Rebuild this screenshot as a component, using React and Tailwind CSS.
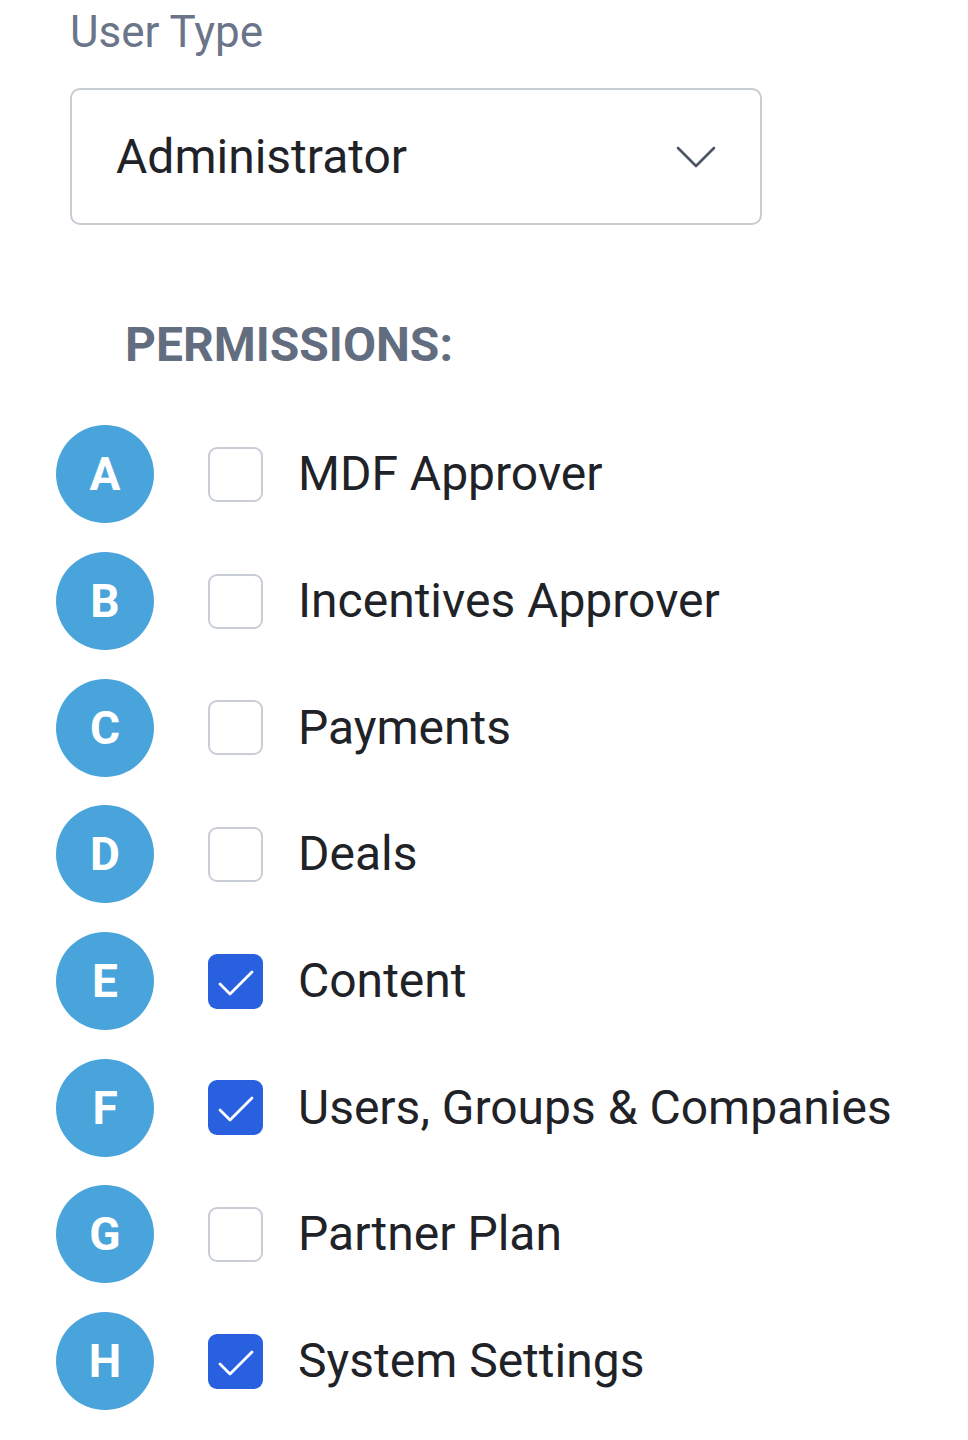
import React from 'react';

const ChevronDownIcon = () => (
  <svg className="w-[40px] h-[24px]" fill="none" stroke="currentColor" viewBox="0 0 40 24">
    <path strokeLinecap="round" strokeLinejoin="round" strokeWidth={2.6} d="M2 3l18 18 18-18" />
  </svg>
);

const CheckIcon = () => (
  <svg className="w-[55px] h-[55px]" fill="none" stroke="white" viewBox="0 0 55 55">
    <path strokeLinecap="round" strokeLinejoin="round" strokeWidth={2.8} d="M12 30l10 10 22-22" />
  </svg>
);

const permissions = [
  { key: 'A', label: 'MDF Approver', checked: false },
  { key: 'B', label: 'Incentives Approver', checked: false },
  { key: 'C', label: 'Payments', checked: false },
  { key: 'D', label: 'Deals', checked: false },
  { key: 'E', label: 'Content', checked: true },
  { key: 'F', label: 'Users, Groups & Companies', checked: true },
  { key: 'G', label: 'Partner Plan', checked: false },
  { key: 'H', label: 'System Settings', checked: true },
];

const PermissionRow = ({ item }) => (
  <div className="flex items-center h-[126.7px]">
    {/* Marker */}
    <div className="w-[98px] h-[98px] rounded-full bg-[#4aa4dc] flex items-center justify-center">
      <span className="text-white font-bold text-[46px] leading-none">{item.key}</span>
    </div>

    {/* Checkbox */}
    <div
      className={`ml-[54px] w-[55px] h-[55px] rounded-[9px] flex items-center justify-center ${
        item.checked ? 'bg-[#2860df]' : 'border-2 border-[#c9ced6] bg-white'
      }`}
    >
      {item.checked && <CheckIcon />}
    </div>

    {/* Label */}
    <span className="ml-[35px] text-[48px] text-[#1f2328] leading-none">{item.label}</span>
  </div>
);

const App = () => {
  return (
    <div className="w-[968px] h-[1440px] bg-white font-['Roboto',sans-serif] overflow-hidden">
      <div className="pl-[56px] pt-[4px]">
        {/* User Type */}
        <div className="pl-[14px]">
          <p className="text-[44px] leading-[56px] text-[#6b7589]">User Type</p>
          <div className="mt-[28px] w-[692px] h-[137px] border-2 border-[#c8ccd3] rounded-[10px] flex items-center justify-between pl-[44px] pr-[44px]">
            <span className="text-[48px] text-[#1f2328]">Administrator</span>
            <span className="text-[#4b5563]">
              <ChevronDownIcon />
            </span>
          </div>
        </div>

        {/* Permissions */}
        <h2 className="mt-[96px] pl-[69px] text-[48px] leading-none font-bold text-[#636d80]">PERMISSIONS:</h2>

        <div className="mt-[42px] flex flex-col">
          {permissions.map((item) => (
            <PermissionRow key={item.key} item={item} />
          ))}
        </div>
      </div>
    </div>
  );
};

export default App;
